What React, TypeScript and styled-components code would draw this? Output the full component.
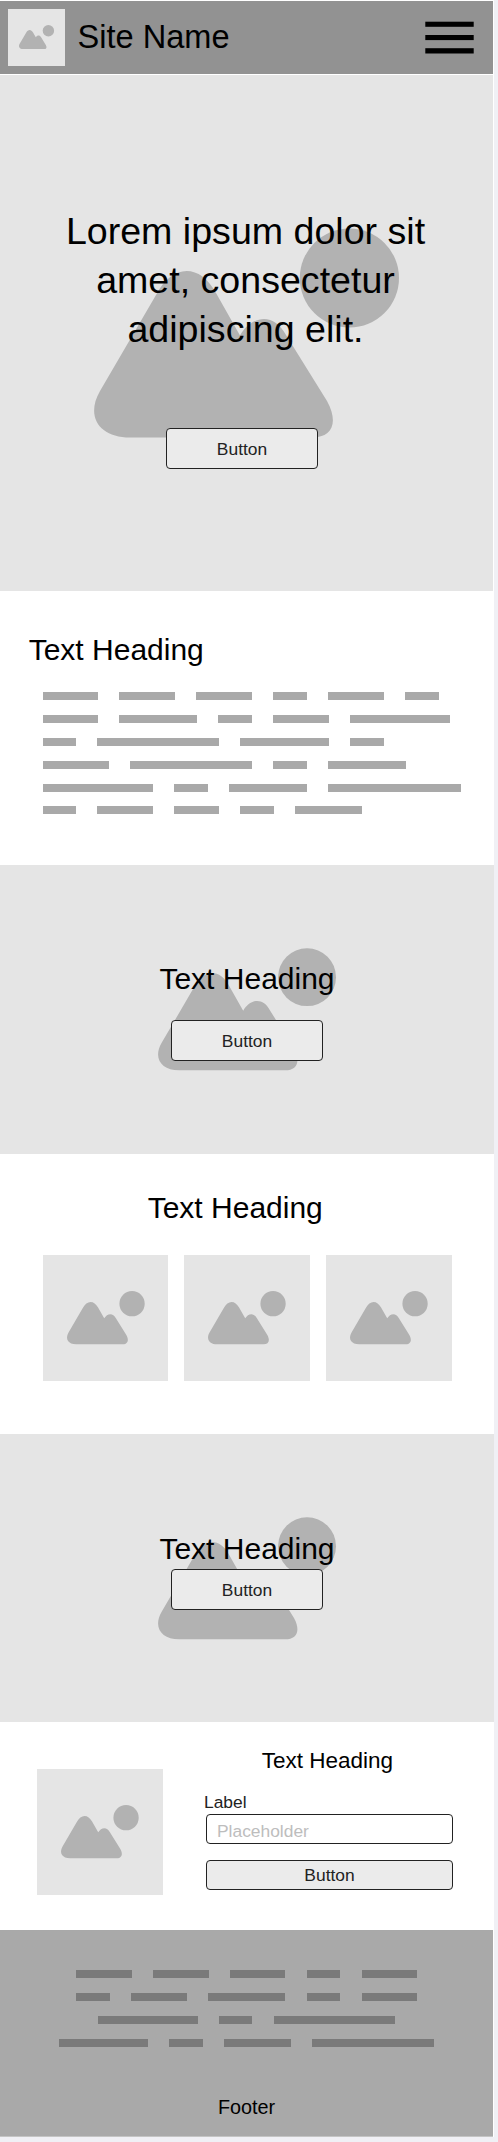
import React from "react";
import styled, { createGlobalStyle } from "styled-components";

const GlobalStyle = createGlobalStyle`
  *, *::before, *::after { box-sizing: border-box; }
  body {
    margin: 0;
    background: #f0f0f5;
    font-family: "Liberation Sans", Arial, Helvetica, sans-serif;
    color: #000;
  }
`;

const Page = styled.div`
  width: 494px;
  height: 2137px;
  padding-top: 1px;
  background: #fff;
`;

const Header = styled.header`
  display: flex;
  align-items: flex-start;
  width: 493px;
  height: 73px;
  margin-bottom: 1px;
  padding: 8px 19px 0 8px;
  background: #929292;
`;

const SiteName = styled.div`
  flex: 1;
  margin: 9px 0 0 12.5px;
  font-size: 32.6px;
  line-height: 38px;
  white-space: nowrap;
`;

const MenuIcon = styled.svg`
  display: block;
  width: 49px;
  height: 34px;
  margin-top: 12px;
`;

const Picture = styled.div<{ $size: number; $width?: number }>`
  display: grid;
  place-items: center;
  flex: none;
  width: ${(p) => p.$width ?? p.$size}px;
  height: ${(p) => p.$size}px;
  background: #e5e5e5;
`;

const Landscape = styled.svg<{ $width: number }>`
  display: block;
  width: ${(p) => p.$width}px;
  height: ${(p) => (p.$width * 209.5) / 305}px;
  overflow: visible;
`;

const Banner = styled.section<{ $width: number; $height: number }>`
  display: grid;
  width: ${(p) => p.$width}px;
  height: ${(p) => p.$height}px;
  background: #e5e5e5;

  > * { grid-area: 1 / 1; }
  > svg { place-self: center; }
`;

const BannerContent = styled.div<{ $top: number; $gap: number }>`
  display: flex;
  flex-direction: column;
  align-items: center;
  gap: ${(p) => p.$gap}px;
  padding-top: ${(p) => p.$top}px;
`;

const HeroTitle = styled.h1`
  width: 400px;
  margin: 0 2px 0 0;
  font-size: 37.6px;
  font-weight: 400;
  line-height: 49px;
  text-align: center;
`;

const Heading = styled.h2<{ $size?: number }>`
  margin: 0;
  font-size: ${(p) => p.$size ?? 30}px;
  font-weight: 400;
  line-height: 34px;
  white-space: nowrap;
`;

const Button = styled.button<{ $width: number; $height: number; $shift?: number }>`
  width: ${(p) => p.$width}px;
  height: ${(p) => p.$height}px;
  margin: 0 0 0 ${(p) => p.$shift ?? 0}px;
  padding: 0;
  border: 1px solid #222;
  border-radius: 4px;
  background: #ebebeb;
  color: #222;
  font: 17.4px/20px "Liberation Sans", Arial, sans-serif;
`;

const Article = styled.section`
  height: 274px;
  padding: 42px 0 0 28.7px;
`;

const Copy = styled.div`
  display: flex;
  flex-direction: column;
  gap: 15px;
  padding: 25px 0 0 14.3px;
`;

const Line = styled.div`
  display: flex;
  gap: 21px;
  height: 8px;

  &:last-child { margin-top: -1px; }
`;

const Word = styled.span<{ $units: number }>`
  width: ${(p) => p.$units * 11 + 1}px;
  background: #a9a9a9;

  &:first-child { width: ${(p) => p.$units * 11}px; }
`;

const Gallery = styled.section`
  height: 280px;
  padding: 37px 0 0 43px;
`;

const GalleryHeading = styled.div`
  padding-left: 104.7px;
`;

const GalleryRow = styled.div`
  display: flex;
  gap: 16px;
  margin-top: 30px;
`;

const Signup = styled.section`
  display: flex;
  align-items: flex-start;
  height: 208px;
  padding: 22px 0 0 37px;

  > ${Picture} { margin-top: 25px; }
`;

const Form = styled.div`
  display: flex;
  flex-direction: column;
  width: 249px;
  margin-left: 41px;
`;

const FormHeading = styled.div`
  padding-left: 57.8px;
`;

const Label = styled.label`
  margin-top: 14px;
  font-size: 17.4px;
  line-height: 20px;
  color: #222;
`;

const Input = styled.input`
  width: 247px;
  height: 30px;
  margin: 2px 0 16px 2px;
  padding: 4px 10px 0;
  border: 1px solid #222;
  border-radius: 4px;
  background: #fff;
  font: 17.4px/20px "Liberation Sans", Arial, sans-serif;

  &::placeholder { color: #bdbdbd; opacity: 1; }
`;

const Footer = styled.footer`
  width: 493px;
  height: 207px;
  padding-top: 40px;
  border-bottom: 1px solid #c4c4c4;
  background: #a9a9a9;
`;

const FooterCopy = styled.div`
  display: flex;
  flex-direction: column;
  align-items: center;
  gap: 15px;
  width: 493.2px;
`;

const FooterLine = styled.div`
  display: flex;
  gap: 21.3px;
  height: 8px;
`;

const FooterWord = styled.span<{ $units: number }>`
  width: ${(p) => p.$units * 11 + 0.6}px;
  background: #7a7a7a;
`;

const FooterLabel = styled.div`
  margin-top: 48px;
  font-size: 19.8px;
  line-height: 24px;
  text-align: center;
`;

const articleLines = [
  [5, 5, 5, 3, 5, 3],
  [5, 7, 3, 5, 9],
  [3, 11, 8, 3],
  [6, 11, 3, 7],
  [10, 3, 7, 12],
  [3, 5, 4, 3, 6],
];

const footerLines = [
  [5, 5, 5, 3, 5],
  [3, 5, 7, 3, 5],
  [9, 3, 11],
  [8, 3, 6, 11],
];

function Mountains({ width }: { width: number }) {
  return (
    <Landscape $width={width} viewBox="0 0 305 209.5" fill="#b2b2b2" aria-hidden="true">
      <circle cx="255.4" cy="50" r="49.6" />
      <path d="M36 209.5C6 209.5-9 189 6 163L62 67C78 35.500 106 35 122 65L146 107.400C158 87 180 84 192 107L233 173C245 195 238 209.500 218 209.500Z" />
    </Landscape>
  );
}

export default function App() {
  return (
    <>
      <GlobalStyle />
      <Page>
        <Header>
          <Picture $size={57}>
            <Mountains width={35.1} />
          </Picture>
          <SiteName>Site Name</SiteName>
          <MenuIcon viewBox="0 0 49 34" aria-label="Menu">
            <rect x="0.3" y="0.7" width="48.4" height="5.1" />
            <rect x="0.3" y="14" width="48.4" height="5.1" />
            <rect x="0.3" y="27.200" width="48.4" height="5.300" />
          </MenuIcon>
        </Header>

        <Banner $width={493} $height={516}>
          <Mountains width={305} />
          <BannerContent $top={132} $gap={74}>
            <HeroTitle>
              Lorem ipsum dolor sit amet, consectetur adipiscing elit.
            </HeroTitle>
            <Button $width={152} $height={41} $shift={-9}>Button</Button>
          </BannerContent>
        </Banner>

        <Article>
          <Heading>Text Heading</Heading>
          <Copy>
            {articleLines.map((line, i) => (
              <Line key={i}>
                {line.map((units, j) => <Word key={j} $units={units} />)}
              </Line>
            ))}
          </Copy>
        </Article>

        <Banner $width={494} $height={289}>
          <Mountains width={178} />
          <BannerContent $top={97} $gap={24}>
            <Heading>Text Heading</Heading>
            <Button $width={152} $height={41}>Button</Button>
          </BannerContent>
        </Banner>

        <Gallery>
          <GalleryHeading>
            <Heading>Text Heading</Heading>
          </GalleryHeading>
          <GalleryRow>
            <Picture $size={126} $width={125}><Mountains width={77.7} /></Picture>
            <Picture $size={126}><Mountains width={77.7} /></Picture>
            <Picture $size={126}><Mountains width={77.7} /></Picture>
          </GalleryRow>
        </Gallery>

        <Banner $width={494} $height={288}>
          <Mountains width={178} />
          <BannerContent $top={98} $gap={3}>
            <Heading>Text Heading</Heading>
            <Button $width={152} $height={41}>Button</Button>
          </BannerContent>
        </Banner>

        <Signup>
          <Picture $size={126}><Mountains width={77.7} /></Picture>
          <Form>
            <FormHeading>
              <Heading $size={22.5}>Text Heading</Heading>
            </FormHeading>
            <Label htmlFor="entry">Label</Label>
            <Input id="entry" placeholder="Placeholder" />
            <Button $width={247} $height={30} $shift={2}>Button</Button>
          </Form>
        </Signup>

        <Footer>
          <FooterCopy>
            {footerLines.map((line, i) => (
              <FooterLine key={i}>
                {line.map((units, j) => <FooterWord key={j} $units={units} />)}
              </FooterLine>
            ))}
          </FooterCopy>
          <FooterLabel>Footer</FooterLabel>
        </Footer>
      </Page>
    </>
  );
}
